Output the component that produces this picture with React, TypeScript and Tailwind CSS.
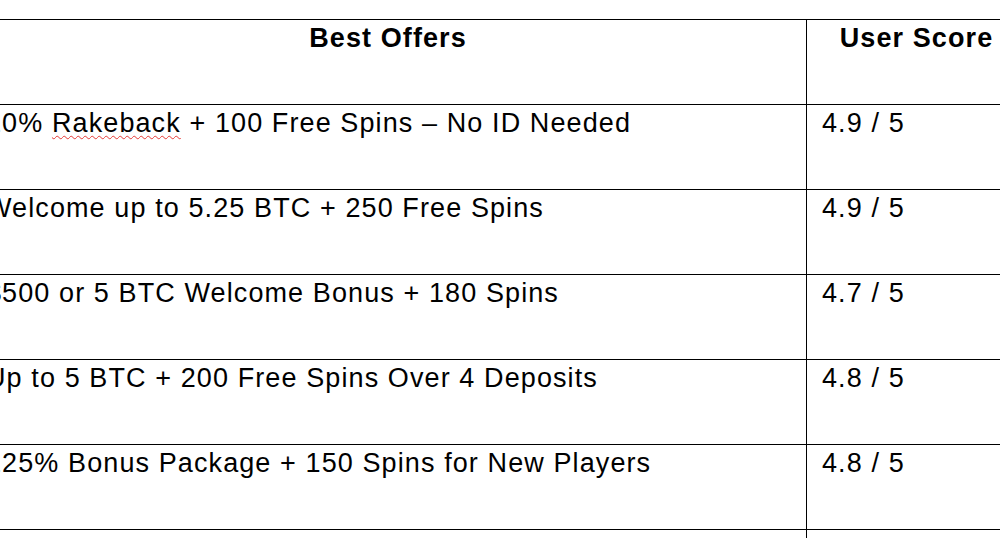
import React from "react";

const rows: { offer: string; score: string; spell?: boolean }[] = [
  { offer: "10% Rakeback + 100 Free Spins – No ID Needed", score: "4.9 / 5", spell: true },
  { offer: "Welcome up to 5.25 BTC + 250 Free Spins", score: "4.9 / 5" },
  { offer: "$500 or 5 BTC Welcome Bonus + 180 Spins", score: "4.7 / 5" },
  { offer: "Up to 5 BTC + 200 Free Spins Over 4 Deposits", score: "4.8 / 5" },
  { offer: "125% Bonus Package + 150 Spins for New Players", score: "4.8 / 5" },
  { offer: "", score: "" },
];

function Offer({ text, spell }: { text: string; spell?: boolean }) {
  if (!spell) return <>{text}</>;
  const [a, ...rest] = text.split(" ");
  const b = rest[0];
  const tail = rest.slice(1).join(" ");
  return (
    <>
      {a}{" "}
      <span className="underline decoration-wavy decoration-[#e53935] decoration-1 underline-offset-[3px]">{b}</span>{" "}
      {tail}
    </>
  );
}

export default function App() {
  return (
    <div className="w-[1000px] h-[538px] overflow-hidden bg-white text-black font-['Liberation_Sans',Arial,sans-serif]">
      <div className="pt-[19px] ml-[-31px]">
        <table className="table-fixed border-collapse w-[1057px] text-[27px] leading-[30px] tracking-[1.1px]">
          <colgroup>
            <col className="w-[837px]" />
            <col className="w-[220px]" />
          </colgroup>
          <thead>
            <tr className="h-[85px]">
              <th className="border border-black align-top text-center font-bold pt-[3px] px-[16px]">Best Offers</th>
              <th className="border border-black align-top text-center font-bold pt-[3px] px-[16px]">User Score</th>
            </tr>
          </thead>
          <tbody>
            {rows.map((r, i) => (
              <tr key={i} className="h-[85px]">
                <td className="border border-black align-top text-left font-normal pt-[3px] pl-[16px] whitespace-nowrap">
                  <Offer text={r.offer} spell={r.spell} />
                </td>
                <td className="border border-black align-top text-left font-normal pt-[3px] pl-[15px] whitespace-nowrap">
                  {r.score}
                </td>
              </tr>
            ))}
          </tbody>
        </table>
      </div>
    </div>
  );
}
